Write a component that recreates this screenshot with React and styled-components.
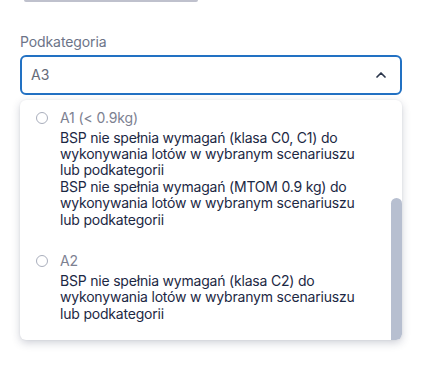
import React from "react";
import styled, { createGlobalStyle } from "styled-components";

const Global = createGlobalStyle`
  html, body { margin: 0; padding: 0; background: #fff; }
  body { font-family: Inter, "Noto Sans", sans-serif; -webkit-font-smoothing: antialiased; }
`;

const Page = styled.div`
  width: 426px;
  height: 392px;
  box-sizing: border-box;
  padding: 0 24px 0 20px;
  display: flex;
  flex-direction: column;
`;

const PrevEdge = styled.div`
  width: 174px;
  height: 1.5px;
  margin-left: 4px;
  background: #bfc1cd;
  border-radius: 0 0 2px 2px;
`;

const Label = styled.label`
  margin-top: 30px;
  font-size: 14px;
  line-height: 20px;
  color: #6c7488;
  letter-spacing: -0.1px;
`;

const Select = styled.div`
  margin-top: 3px;
  height: 40px;
  box-sizing: border-box;
  border: 2px solid #2271c3;
  border-radius: 6px;
  display: flex;
  align-items: center;
  justify-content: space-between;
  padding: 0 11px 0 9px;
  font-size: 14px;
  color: #656b79;
`;

const Dropdown = styled.div`
  position: relative;
  margin-top: 5px;
  width: 382px;
  background: #fff;
  border-radius: 6px;
  box-shadow: 0 3px 8px rgba(40, 50, 80, 0.22), 0 0 2px rgba(40, 50, 80, 0.08);
  padding-bottom: 3px;
  overflow: hidden;
`;

const Thumb = styled.div`
  position: absolute;
  right: 0;
  bottom: 0;
  width: 11px;
  height: 142px;
  background: #b7bfd0;
  border-radius: 6px 6px 6px 0;
`;

const Option = styled.div`
  display: grid;
  grid-template-columns: 12px 1fr;
  column-gap: 12px;
  padding: 8px 30px 15px 16px;
`;

const Radio = styled.span`
  width: 12px;
  height: 12px;
  box-sizing: border-box;
  border: 1.5px solid #a9aebc;
  border-radius: 50%;
  margin-top: 4px;
`;

const OptTitle = styled.div`
  font-size: 14px;
  line-height: 20px;
  color: #7d8191;
  margin-bottom: 2px;
  letter-spacing: -0.1px;
`;

const Desc = styled.div`
  font-size: 14px;
  line-height: 16.4px;
  color: #1c2844;
  letter-spacing: -0.2px;
  white-space: nowrap;
`;

const Chevron = () => (
  <svg width="16" height="16" viewBox="0 0 24 24" fill="none" stroke="#2b364c" strokeWidth="2.6" strokeLinecap="round" strokeLinejoin="round">
    <path d="m6 15 6-6 6 6" />
  </svg>
);

const options = [
  {
    title: "A1 (< 0.9kg)",
    lines: [
      "BSP nie spełnia wymagań (klasa C0, C1) do",
      "wykonywania lotów w wybranym scenariuszu",
      "lub podkategorii",
      "BSP nie spełnia wymagań (MTOM 0.9 kg) do",
      "wykonywania lotów w wybranym scenariuszu",
      "lub podkategorii",
    ],
  },
  {
    title: "A2",
    lines: [
      "BSP nie spełnia wymagań (klasa C2) do",
      "wykonywania lotów w wybranym scenariuszu",
      "lub podkategorii",
    ],
  },
];

export default function App() {
  return (
    <>
      <Global />
      <Page>
        <PrevEdge />
        <Label>Podkategoria</Label>
        <Select>
          <span>A3</span>
          <Chevron />
        </Select>
        <Dropdown>
          {options.map((o) => (
            <Option key={o.title}>
              <Radio />
              <div>
                <OptTitle>{o.title}</OptTitle>
                {o.lines.map((l, i) => (
                  <Desc key={i}>{l}</Desc>
                ))}
              </div>
            </Option>
          ))}
          <Thumb />
        </Dropdown>
      </Page>
    </>
  );
}
